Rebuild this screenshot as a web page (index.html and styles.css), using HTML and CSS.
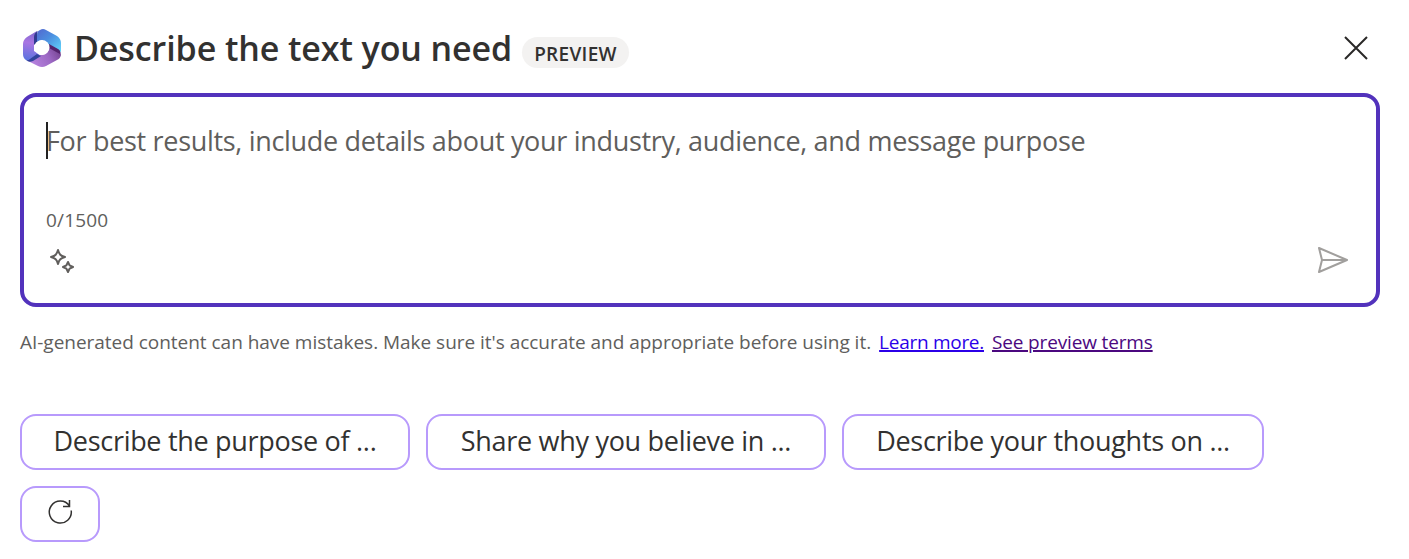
FILE: index.html
```html
<!DOCTYPE html>
<html lang="en">
<head>
<meta charset="utf-8">
<title>Describe the text you need</title>
<link rel="stylesheet" href="styles.css">
</head>
<body>
<main class="panel">
  <header class="header">
    <svg class="logo" viewBox="0 0 40 40" aria-hidden="true">
      <defs>
        <linearGradient id="left" x1="0.5" y1="0" x2="0.4" y2="1"><stop offset="0" stop-color="#8068ce"/><stop offset=".4" stop-color="#a975e2"/><stop offset="1" stop-color="#5873df"/></linearGradient>
        <linearGradient id="right" x1="0" y1="0" x2="1" y2="1"><stop offset="0" stop-color="#5268cf"/><stop offset=".45" stop-color="#4b8fe0"/><stop offset="1" stop-color="#64d7fb"/></linearGradient>
        <linearGradient id="bottom" x1="0" y1="0.6" x2="1" y2="0.2"><stop offset="0" stop-color="#b783df"/><stop offset=".55" stop-color="#9c68c4"/><stop offset="1" stop-color="#713f8b"/></linearGradient>
      </defs>
      <path fill="url(#left)" d="M15 3 5 9Q1 12 1 16V26Q1 30 4 32Q7 34 10 32L18 27 12 23V16L15 12Z"/>
      <path fill="url(#right)" d="M15 14V7Q15 3 18 2Q21 0 24 2L35 8Q39 11 39 15V24L27 17 20 12Z"/>
      <path fill="#303b91" d="M16 3Q12 5 12 9V17L15 14V7Q15 4 16 3Z"/>
      <path fill="url(#bottom)" d="M27 17 37 22Q39 24 39 27Q38 31 35 32L24 38Q20 40 16 38L6 33 18 27Q26 27 27 20Z"/>
      <path fill="#54236c" d="M27 16 36 21Q39 23 38 26L27 20Z"/>
      <path fill="#32439d" d="M4 32Q7 35 11 33L19 28 15 26 8 31Q6 33 4 32Z"/>
      <circle cx="20" cy="19.500" r="7.500" fill="#fff"/>
    </svg>
    <h1 class="title">Describe the text you need</h1>
    <span class="badge">PREVIEW</span>
    <button class="close" aria-label="Close"><svg viewBox="0 0 24 24"><path d="m1 1 22 22M23 1 1 23"/></svg></button>
  </header>
  <section class="prompt">
    <p class="placeholder"><span class="caret"></span><span>For best results, include details about your industry, audience, and message purpose</span></p>
    <p class="count">0/1500</p>
    <div class="tools">
      <svg class="sparkle" viewBox="0 0 26 26"><path d="M9 2Q10 5.500 11.300 6.700 12.500 8 16 9 12.500 10 11.300 11.300 10 12.500 9 16 8 12.500 6.700 11.300 5.500 10 2 9 5.500 8 6.700 6.700 8 5.500 9 2ZM19 14 20.600 17.400 24 19 20.600 20.600 19 24 17.400 20.600 14 19 17.400 17.400Z"/></svg>
      <svg class="send" viewBox="0 0 32 28"><path d="M2 2 30 14 2 26 5 14ZM5 14H30"/></svg>
    </div>
  </section>
  <p class="notice"><span class="disclaimer">AI-generated content can have mistakes. Make sure it's accurate and appropriate before using it.</span><a class="learn" href="#">Learn more.</a><a class="terms" href="#">See preview terms</a></p>
  <div class="suggestions">
    <button class="chip purpose"><span>Describe the purpose of ...</span></button>
    <button class="chip belief"><span>Share why you believe in ...</span></button>
    <button class="chip thoughts"><span>Describe your thoughts on ...</span></button>
    <button class="chip refresh" aria-label="Refresh"><svg viewBox="0 0 25 25"><path d="M23.200 11.500A11 11 0 1 1 21.500 7M21.500 1V7.500H15"/></svg></button>
  </div>
</main>
</body>
</html>
```
FILE: styles.css
```css
* { box-sizing: border-box; }
body { margin: 0; background: #fff; color: #323130; font-family: "Open Sans", "Noto Sans", sans-serif; }
button { padding: 0; font: inherit; color: inherit; background: none; }
h1, p { margin: 0; }
.panel { padding: 21px 29px 0 20px; }
.header { display: flex; align-items: center; height: 54px; padding-left: 2px; }
.logo { width: 40px; height: 40px; }
.title { margin-left: 12px; font-size: 34px; font-weight: 600; letter-spacing: -0.09px; white-space: nowrap; width: 438px; line-height: 50px; }
.badge { margin: 9px 0 0 10px; width: 107px; height: 31px; border-radius: 16px; background: #f3f2f1; font-size: 19px; font-weight: 600; letter-spacing: 0.3px; line-height: 34px; text-align: center; }
.close { margin: 0 12px 0 auto; width: 24px; height: 24px; border: 0; }
.close svg { display: block; fill: none; stroke: #292827; stroke-width: 2; }
.prompt { margin-top: 18px; height: 214px; border: 4px solid #5232bc; border-radius: 16px; padding: 25px 26px 0 22px; }
.placeholder { display: flex; height: 38px; font-size: 27px; letter-spacing: -0.315px; line-height: 37px; color: #605e5c; white-space: nowrap; }
.caret { width: 2px; height: 37px; margin-right: -2px; background: #222; }
.count { margin-top: 47px; font-size: 19px; letter-spacing: 0.15px; line-height: 27px; color: #605e5c; }
.tools { display: flex; justify-content: space-between; align-items: center; margin-top: 11px; padding: 0 1px 0 3px; height: 30px; }
.tools svg { fill: none; stroke-width: 2; stroke-linejoin: round; }
.sparkle { width: 26px; height: 26px; margin-top: 2px; stroke: #605e5c; }
.send { width: 32px; height: 28px; stroke: #a19f9d; }
.notice { display: flex; gap: 8px; margin-top: 21px; height: 28px; line-height: 28px; font-size: 19px; color: #605e5c; white-space: nowrap; }
.disclaimer { letter-spacing: -0.025px; }
.learn { color: #2b00e8; letter-spacing: -0.28px; text-decoration-thickness: 2px; }
.terms { color: #4b087f; letter-spacing: -0.15px; text-decoration-thickness: 2px; }
.suggestions { display: flex; flex-wrap: wrap; gap: 16px; margin-top: 58px; padding-right: 60px; }
.chip { display: flex; justify-content: center; align-items: center; height: 56px; border: 2px solid #b89afc; border-radius: 16px; font-size: 27px; letter-spacing: -0.3px; white-space: nowrap; padding-bottom: 3px; }
.purpose { width: 390px; }
.belief { width: 400px; }
.thoughts { width: 422px; }
.refresh { width: 80px; padding-bottom: 5px; }
.refresh svg { width: 25px; height: 25px; fill: none; stroke: #323130; stroke-width: 1.500; }
```
